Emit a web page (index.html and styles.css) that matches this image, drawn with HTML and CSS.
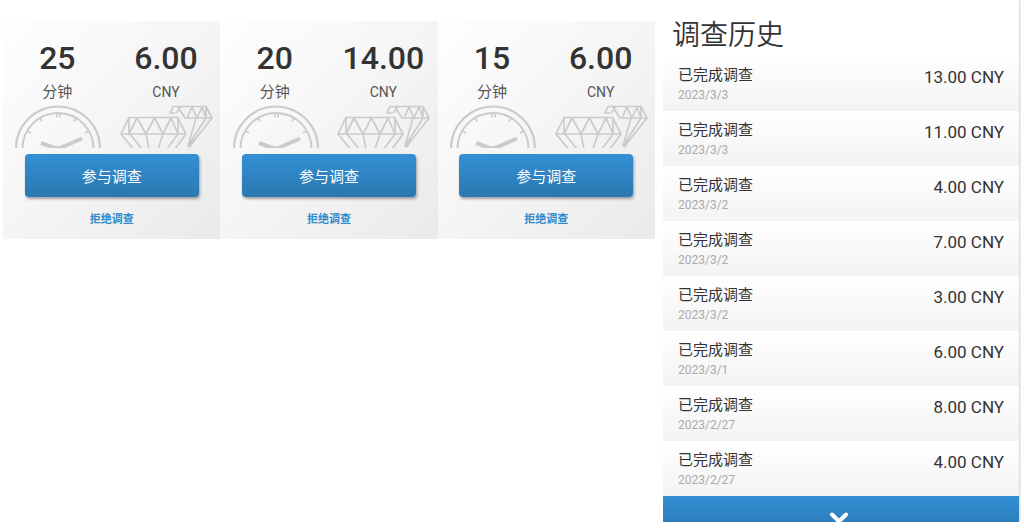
FILE: index.html
```html
<!DOCTYPE html>
<html lang="zh-CN">
<head>
  <meta charset="utf-8" />
  <title>调查历史</title>
  <meta name="viewport" content="width=device-width, initial-scale=1" />
  <link rel="stylesheet" href="styles.css">
</head>
<body>
  <svg class="sprite" aria-hidden="true">
    <symbol id="clock" viewBox="0 0 88 43">
      <g fill="none" stroke="#cbcbcb">
        <circle cx="45" cy="43.500" r="42" stroke-width="2.2" />
        <circle cx="45" cy="43.500" r="35.500" stroke-width="2" />
        <path stroke-width="1.6" d="M44 9v3.500M47 9v3.500M27 13l2 3.500M63 13l-2 3.500M14.500 26l3.500 2M75.500 26l-3.500 2" />
        <path stroke-width="4" d="M28 38L43 43.500M46 43.500L69 33.500" />
        <circle cx="45" cy="45" r="4" fill="#cbcbcb" stroke="none" />
      </g>
    </symbol>
    <symbol id="diamonds" viewBox="0 0 94 43">
      <g fill="none" stroke="#cbcbcb" stroke-width="1.7" stroke-linejoin="round">
        <path d="M10 12.500H58.500L67 29H2Z" />
        <path d="M10 12.500V29L18 13L27 29L35.500 13L44 29L52 13L59 29V12.500" />
        <path d="M2 29L14.500 44M11 29L23 44M27 29L30 44M44 29L39 44M59 29L48 44M67 29L56 44" />
        <path d="M56 8H51L54 1.500H87L93 13H66L59 2M57 8L62 2M68 13L73 2L78 13L83 2L87 13V1.500" />
        <path d="M77 13L69 41L87 13M93 13L70 42" />
        <path stroke-width="3" d="M75 34L70 42" />
      </g>
    </symbol>
  </svg>

  <main class="page">
    <section class="surveys">
      <article class="card">
        <div class="stats">
          <div class="stat">
            <strong>25</strong>
            <span class="minutes">分钟</span>
            <svg width="88" height="43"><use href="#clock" /></svg>
          </div>
          <div class="stat">
            <strong>6.00</strong>
            <span>CNY</span>
            <svg width="94" height="43"><use href="#diamonds" /></svg>
          </div>
        </div>
        <button class="join" type="button">参与调查</button>
        <a class="decline" href="#">拒绝调查</a>
      </article>
      <article class="card">
        <div class="stats">
          <div class="stat">
            <strong>20</strong>
            <span class="minutes">分钟</span>
            <svg width="88" height="43"><use href="#clock" /></svg>
          </div>
          <div class="stat">
            <strong>14.00</strong>
            <span>CNY</span>
            <svg width="94" height="43"><use href="#diamonds" /></svg>
          </div>
        </div>
        <button class="join" type="button">参与调查</button>
        <a class="decline" href="#">拒绝调查</a>
      </article>
      <article class="card">
        <div class="stats">
          <div class="stat">
            <strong>15</strong>
            <span class="minutes">分钟</span>
            <svg width="88" height="43"><use href="#clock" /></svg>
          </div>
          <div class="stat">
            <strong>6.00</strong>
            <span>CNY</span>
            <svg width="94" height="43"><use href="#diamonds" /></svg>
          </div>
        </div>
        <button class="join" type="button">参与调查</button>
        <a class="decline" href="#">拒绝调查</a>
      </article>
    </section>

    <section class="history">
      <h1>调查历史</h1>
      <ul>
        <li>
          <div><p>已完成调查</p><time>2023/3/3</time></div>
          <span class="amount">13.00 CNY</span>
        </li>
        <li>
          <div><p>已完成调查</p><time>2023/3/3</time></div>
          <span class="amount">11.00 CNY</span>
        </li>
        <li>
          <div><p>已完成调查</p><time>2023/3/2</time></div>
          <span class="amount">4.00 CNY</span>
        </li>
        <li>
          <div><p>已完成调查</p><time>2023/3/2</time></div>
          <span class="amount">7.00 CNY</span>
        </li>
        <li>
          <div><p>已完成调查</p><time>2023/3/2</time></div>
          <span class="amount">3.00 CNY</span>
        </li>
        <li>
          <div><p>已完成调查</p><time>2023/3/1</time></div>
          <span class="amount">6.00 CNY</span>
        </li>
        <li>
          <div><p>已完成调查</p><time>2023/2/27</time></div>
          <span class="amount">8.00 CNY</span>
        </li>
        <li>
          <div><p>已完成调查</p><time>2023/2/27</time></div>
          <span class="amount">4.00 CNY</span>
        </li>
      </ul>
      <button class="more" type="button" aria-label="展开">
        <svg width="20" height="10" viewBox="0 0 20 10"><path d="M3 2.500l7 7l7-7" fill="none" stroke="#fff" stroke-width="4" stroke-linecap="round" /></svg>
      </button>
    </section>
  </main>
</body>
</html>
```

FILE: styles.css
```css
* {
  box-sizing: border-box;
  margin: 0;
  padding: 0;
}
body {
  background: #fff;
  color: #333;
  font-family: Roboto, "Noto Sans CJK SC", sans-serif;
}
button {
  border: none;
  font-family: inherit;
  cursor: pointer;
}
.sprite {
  display: none;
}
.page {
  display: grid;
  grid-template-columns: 652fr 356fr;
  gap: 8px;
  align-items: start;
  padding: 0 5px 0 3px;
}

/* survey cards */
.surveys {
  display: grid;
  grid-template-columns: repeat(3, 1fr);
  padding-top: 21px;
}
.card {
  display: flex;
  flex-direction: column;
  align-items: center;
  padding: 18px 0 12px;
  background: linear-gradient(135deg, #fefefe, #f5f5f5 50%, #eaeaea);
}
.stats {
  display: grid;
  grid-template-columns: 1fr 1fr;
  width: 100%;
}
.stat {
  display: flex;
  flex-direction: column;
  align-items: center;
}
.stat strong {
  font-size: 32px;
  font-weight: 500;
  line-height: 38px;
}
.stat span {
  margin: 5px 0 3px;
  font-size: 14px;
  line-height: 20px;
  color: #555;
}
.stat .minutes {
  font-size: 15px;
}
.join {
  width: 80%;
  height: 43px;
  margin: 6px 0 16px;
  border-radius: 4px;
  background: linear-gradient(#338fd5, #2b78b1);
  box-shadow: 1px 2px 3px rgba(0, 0, 0, 0.35);
  color: #fff;
  font-size: 15px;
}
.decline {
  color: #2f8bcb;
  font-size: 11px;
  font-weight: bold;
  line-height: 14px;
  text-decoration: none;
}

/* history */
.history {
  box-shadow: 1px 0 2px rgba(0, 0, 0, 0.2);
  clip-path: inset(0 -5px 0 0);
}
.history h1 {
  padding: 16px 9px 0;
  font-size: 28px;
  font-weight: 350;
  line-height: 40px;
}
.history ul {
  list-style: none;
}
.history li {
  display: flex;
  justify-content: space-between;
  height: 55px;
  padding: 8px 15px;
  background: linear-gradient(#fff, #f3f3f3);
}
.history p {
  font-size: 15px;
  line-height: 22px;
}
.history time {
  display: block;
  color: #aaa;
  font-size: 12px;
  line-height: 18px;
}
.amount {
  font-size: 17px;
  line-height: 26px;
}
.more {
  display: flex;
  justify-content: center;
  align-items: flex-end;
  width: 100%;
  height: 26px;
  padding-right: 4px;
  background: linear-gradient(#338fd5, #2d80bd);
}
```
